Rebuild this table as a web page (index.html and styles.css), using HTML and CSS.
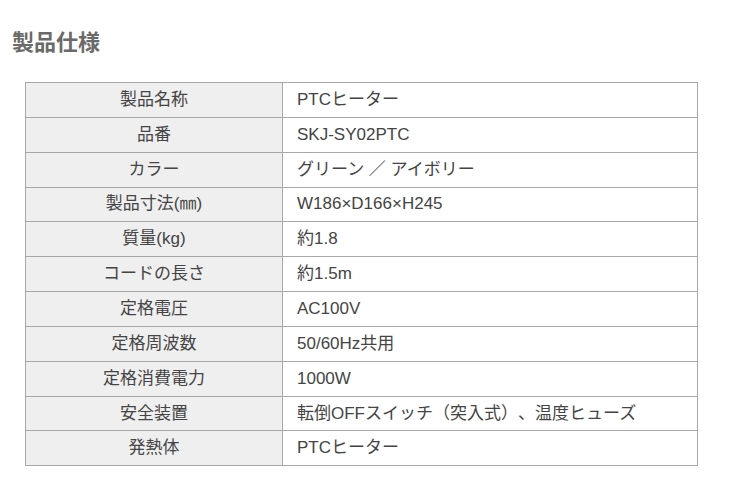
FILE: index.html
```html
<!DOCTYPE html>
<html lang="ja">
<head>
<meta charset="utf-8">
<title>製品仕様</title>
<link rel="stylesheet" href="styles.css">
</head>
<body>
<h2 class="title">製品仕様</h2>
<table class="spec">
<tbody>
<tr><th>製品名称</th><td>PTCヒーター</td></tr>
<tr><th>品番</th><td>SKJ-SY02PTC</td></tr>
<tr><th>カラー</th><td>グリーン ／ アイボリー</td></tr>
<tr><th>製品寸法(㎜)</th><td>W186×D166×H245</td></tr>
<tr><th>質量(kg)</th><td>約1.8</td></tr>
<tr><th>コードの長さ</th><td>約1.5m</td></tr>
<tr><th>定格電圧</th><td>AC100V</td></tr>
<tr><th>定格周波数</th><td>50/60Hz共用</td></tr>
<tr><th>定格消費電力</th><td>1000W</td></tr>
<tr><th>安全装置</th><td>転倒OFFスイッチ（突入式）、温度ヒューズ</td></tr>
<tr><th>発熱体</th><td>PTCヒーター</td></tr>
</tbody>
</table>
</body>
</html>
```
FILE: styles.css
```css
html, body {
  margin: 0;
  padding: 0;
  background: #ffffff;
}
body {
  font-family: "Liberation Sans", "Noto Sans CJK JP", sans-serif;
  color: #444444;
  text-spacing-trim: space-all;
}
.title {
  margin: 0;
  padding: 28px 0 0 12px;
  height: 30px;
  font-size: 22px;
  line-height: 30px;
  font-weight: bold;
  color: #6a6a6a;
}
.spec {
  margin: 24px 0 0 25px;
  width: 673px;
  border-collapse: collapse;
  font-size: 17px;
}
.spec th,
.spec td {
  border: 1px solid #a8a8a8;
  height: 34.85px;
  box-sizing: border-box;
  padding: 0;
  font-weight: normal;
  line-height: 20px;
}
.spec th {
  width: 257px;
  background: #efefef;
  text-align: center;
}
.spec td {
  padding-left: 14px;
  text-align: left;
  background: #ffffff;
}
```
